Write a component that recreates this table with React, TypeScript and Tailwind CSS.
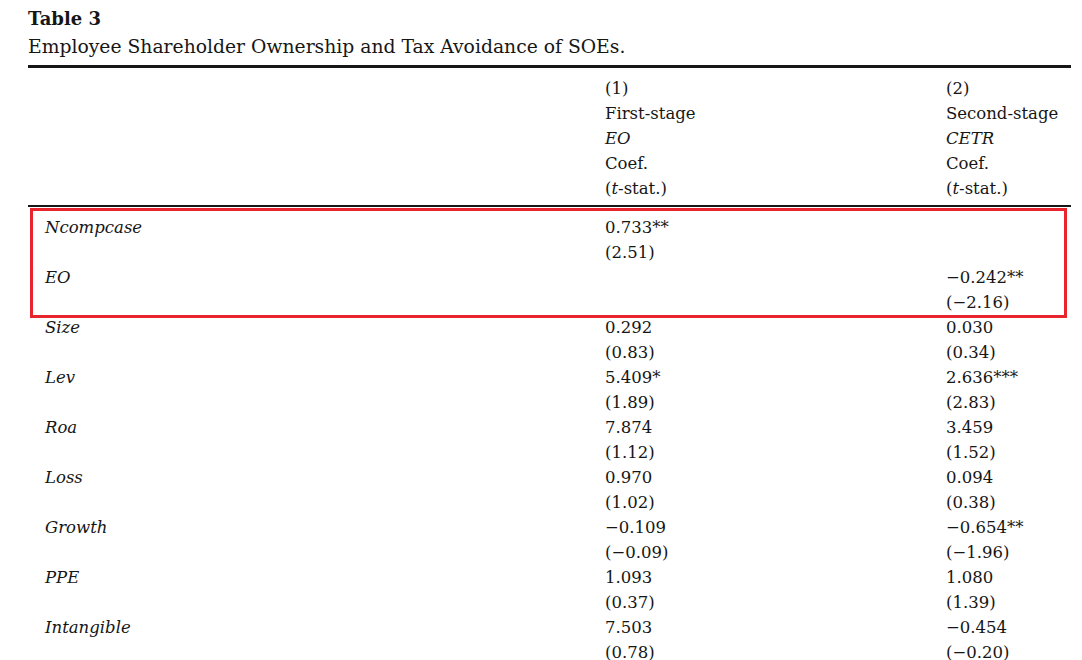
type Row = { label?: string; c1?: string; c2?: string };

const headerRows: { c1: React.ReactNode; c2: React.ReactNode }[] = [
  { c1: '(1)', c2: '(2)' },
  { c1: 'First-stage', c2: 'Second-stage' },
  { c1: <i>EO</i>, c2: <i>CETR</i> },
  { c1: 'Coef.', c2: 'Coef.' },
  {
    c1: (
      <>
        (<i>t</i>-stat.)
      </>
    ),
    c2: (
      <>
        (<i>t</i>-stat.)
      </>
    ),
  },
];

const highlighted: Row[] = [
  { label: 'Ncompcase', c1: '0.733**' },
  { c1: '(2.51)' },
  { label: 'EO', c2: '−0.242**' },
  { c2: '(−2.16)' },
];

const rest: Row[] = [
  { label: 'Size', c1: '0.292', c2: '0.030' },
  { c1: '(0.83)', c2: '(0.34)' },
  { label: 'Lev', c1: '5.409*', c2: '2.636***' },
  { c1: '(1.89)', c2: '(2.83)' },
  { label: 'Roa', c1: '7.874', c2: '3.459' },
  { c1: '(1.12)', c2: '(1.52)' },
  { label: 'Loss', c1: '0.970', c2: '0.094' },
  { c1: '(1.02)', c2: '(0.38)' },
  { label: 'Growth', c1: '−0.109', c2: '−0.654**' },
  { c1: '(−0.09)', c2: '(−1.96)' },
  { label: 'PPE', c1: '1.093', c2: '1.080' },
  { c1: '(0.37)', c2: '(1.39)' },
  { label: 'Intangible', c1: '7.503', c2: '−0.454' },
  { c1: '(0.78)', c2: '(−0.20)' },
];

function TableRow({ row }: { row: Row }) {
  return (
    <div className="grid grid-cols-[560px_341px_1fr] h-[25px] leading-[25px] pl-[17px]">
      <div className="italic">{row.label}</div>
      <div>{row.c1}</div>
      <div>{row.c2}</div>
    </div>
  );
}

export default function App() {
  return (
    <div className="bg-white w-[1082px] h-[660px] overflow-hidden text-[#161616] font-['DejaVu_Serif',serif] text-[16.5px]">
      <div className="pl-[28px] pr-[11px] pt-[5px]">
        {/* Caption */}
        <div className="font-bold text-[18px] leading-[28px]">Table 3</div>
        <div className="text-[18.75px] leading-[28px]">Employee Shareholder Ownership and Tax Avoidance of SOEs.</div>

        <div className="mt-[4px] h-[3px] bg-[#161616]"></div>

        {/* Column headers */}
        <div className="pt-[8px] pb-[4px]">
          {headerRows.map((h, i) => (
            <div key={i} className="grid grid-cols-[560px_341px_1fr] h-[25px] leading-[25px] pl-[17px]">
              <div></div>
              <div>{h.c1}</div>
              <div>{h.c2}</div>
            </div>
          ))}
        </div>

        <div className="h-[2px] bg-[#161616]"></div>

        {/* Body */}
        <div className="pt-[8px]">
          <div className="relative">
            {highlighted.map((r, i) => (
              <TableRow key={i} row={r} />
            ))}
            <div className="absolute left-[2px] right-[4px] -top-[7px] -bottom-[3px] border-[3px] border-[#e8242c] pointer-events-none"></div>
          </div>
          {rest.map((r, i) => (
            <TableRow key={i} row={r} />
          ))}
        </div>
      </div>
    </div>
  );
}
